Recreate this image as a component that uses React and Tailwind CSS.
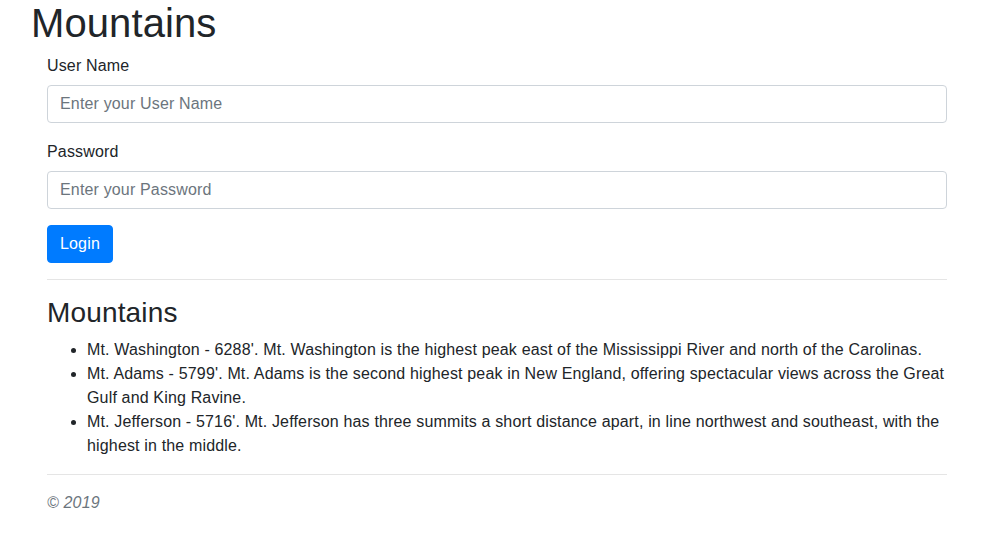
export default function App() {
  const mountains = [
    "Mt. Washington - 6288'. Mt. Washington is the highest peak east of the Mississippi River and north of the Carolinas.",
    "Mt. Adams - 5799'. Mt. Adams is the second highest peak in New England, offering spectacular views across the Great Gulf and King Ravine.",
    "Mt. Jefferson - 5716'. Mt. Jefferson has three summits a short distance apart, in line northwest and southeast, with the highest in the middle.",
  ];

  return (
    <div className="min-h-screen bg-white text-[#212529] font-['Liberation_Sans',Arial,sans-serif] text-base leading-6 tracking-[0.16px]">
      <h1 className="pl-[31px] text-[40px] leading-[46px] mb-[7px] tracking-[0.1px]">Mountains</h1>
      <div className="ml-[47px] w-[900px]">
        <form>
          <div className="mb-4">
            <label className="block pt-px mb-[7px]">User Name</label>
            <input
              type="text"
              placeholder="Enter your User Name"
              className="block w-full h-[38px] px-3 py-1.5 border border-[#ced4da] rounded text-base placeholder:text-[#6c757d] outline-none"
            />
          </div>
          <div className="mb-4">
            <label className="block pt-px mb-[7px]">Password</label>
            <input
              type="password"
              placeholder="Enter your Password"
              className="block w-full h-[38px] px-3 py-1.5 border border-[#ced4da] rounded text-base placeholder:text-[#6c757d] outline-none"
            />
          </div>
          <button
            type="button"
            className="h-[38px] px-3 rounded bg-[#007bff] text-white border border-[#007bff] leading-6"
          >
            Login
          </button>
        </form>
        <hr className="my-4 border-t border-black/10" />
        <h3 className="text-[28px] leading-[34px] mb-2">Mountains</h3>
        <ul className="list-disc pl-10 mb-4">
          {mountains.map((m) => (
            <li key={m}>{m}</li>
          ))}
        </ul>
        <hr className="my-4 border-t border-black/10" />
        <p className="italic text-[#6c757d]">© 2019</p>
      </div>
    </div>
  );
}
